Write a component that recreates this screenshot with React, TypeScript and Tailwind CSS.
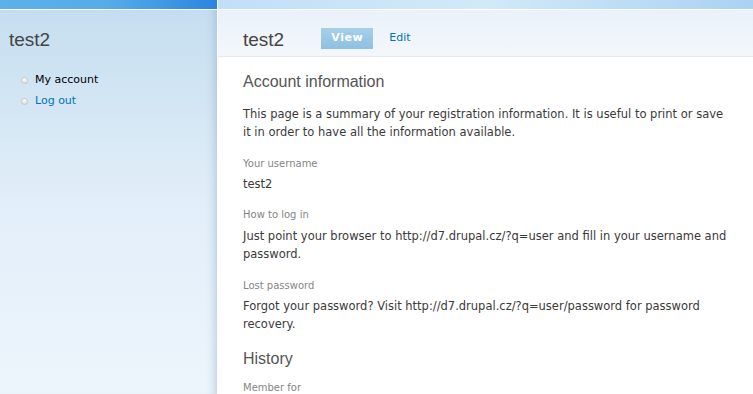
import React from 'react';

const body = "font-['DejaVu_Sans',Verdana,sans-serif]";
const head = "font-['Liberation_Sans',Arial,sans-serif]";

const Field: React.FC<{ label: string; top: string; gap: string; children?: React.ReactNode }> = ({ label, top, gap, children }) => (
  <div className={top}>
    <div className="text-[10px] leading-[16px] text-[#858585]">{label}</div>
    {children && <div className={`${gap} text-[11.5px] leading-[18px] text-[#3a3a3a]`}>{children}</div>}
  </div>
);

const Bullet = () => (
  <span className="h-[7px] w-[7px] shrink-0 rounded-full border border-[#c6c6c6] bg-gradient-to-b from-white to-[#e0e0e0]" />
);

const App: React.FC = () => {
  return (
    <div className={`flex h-[394px] w-full overflow-hidden bg-white ${body}`}>
      {/* left column */}
      <div className="flex w-[217px] shrink-0 flex-col">
        <div className="h-[9px] shrink-0 bg-gradient-to-r from-[#5cb1ea] via-[#56ace9] to-[#2c84de]" />
        <div className="h-px shrink-0 bg-white" />
        <aside className="flex-1 bg-gradient-to-b from-[#c5deef] via-[#e2eef9] to-[#edf5fc] shadow-[inset_-9px_0_8px_-7px_rgba(120,160,190,0.45)]">
          <h2 className={`${head} mt-[18px] pl-[9px] text-[19px] leading-[24px] text-[#444]`}>test2</h2>
          <ul className="mt-[21px] space-y-[7px] pl-[21px] text-[11px] leading-[14px]">
            <li className="flex items-center gap-[7px] text-black">
              <Bullet />
              My account
            </li>
            <li className="flex items-center gap-[7px] text-[#0073ba]">
              <Bullet />
              Log out
            </li>
          </ul>
        </aside>
      </div>
      <div className="w-px shrink-0 bg-white" />
      {/* right column */}
      <div className="flex min-w-0 flex-1 flex-col">
        <div className="h-[9px] shrink-0 bg-gradient-to-r from-[#c2dff7] via-[#d2e9f8] to-[#aad2f3]" />
        <div className="h-px shrink-0 bg-white" />
        <header className="flex h-[47px] shrink-0 items-start border-b border-[#e1eaf3] bg-gradient-to-b from-[#eaf1f9] to-[#f3f7fb] pl-[25px] pt-[18px]">
          <h1 className={`${head} text-[19px] leading-[24px] text-[#444]`}>test2</h1>
          <div className="ml-[37px] flex items-center text-[11px]">
            <span className="flex h-[21px] w-[52px] items-center justify-center bg-gradient-to-b from-[#a6cfe9] to-[#8fbfe2] font-bold tracking-[0.5px] text-white">
              View
            </span>
            <span className="ml-[16px] text-[#0073ba]">Edit</span>
          </div>
        </header>
        <main className="pl-[25px] pr-[20px]">
          <h2 className={`${head} mt-[15px] text-[16px] leading-[20px] text-[#555]`}>Account information</h2>
          <p className="mt-[13px] text-[11.5px] leading-[18px] text-[#3a3a3a]">
            This page is a summary of your registration information. It is useful to print or save it in order to have all the information available.
          </p>
          <Field label="Your username" top="mt-[15px]" gap="mt-[3px]">test2</Field>
          <Field label="How to log in" top="mt-[14px]" gap="mt-[4px]">
            Just point your browser to http://d7.drupal.cz/?q=user and fill in your username and password.
          </Field>
          <Field label="Lost password" top="mt-[15px]" gap="mt-[3px]">
            Forgot your password? Visit http://d7.drupal.cz/?q=user/password for password recovery.
          </Field>
          <h2 className={`${head} mt-[16px] text-[16px] leading-[20px] text-[#555]`}>History</h2>
          <Field label="Member for" top="mt-[11px]" gap="mt-[3px]" />
        </main>
      </div>
    </div>
  );
};

export default App;
